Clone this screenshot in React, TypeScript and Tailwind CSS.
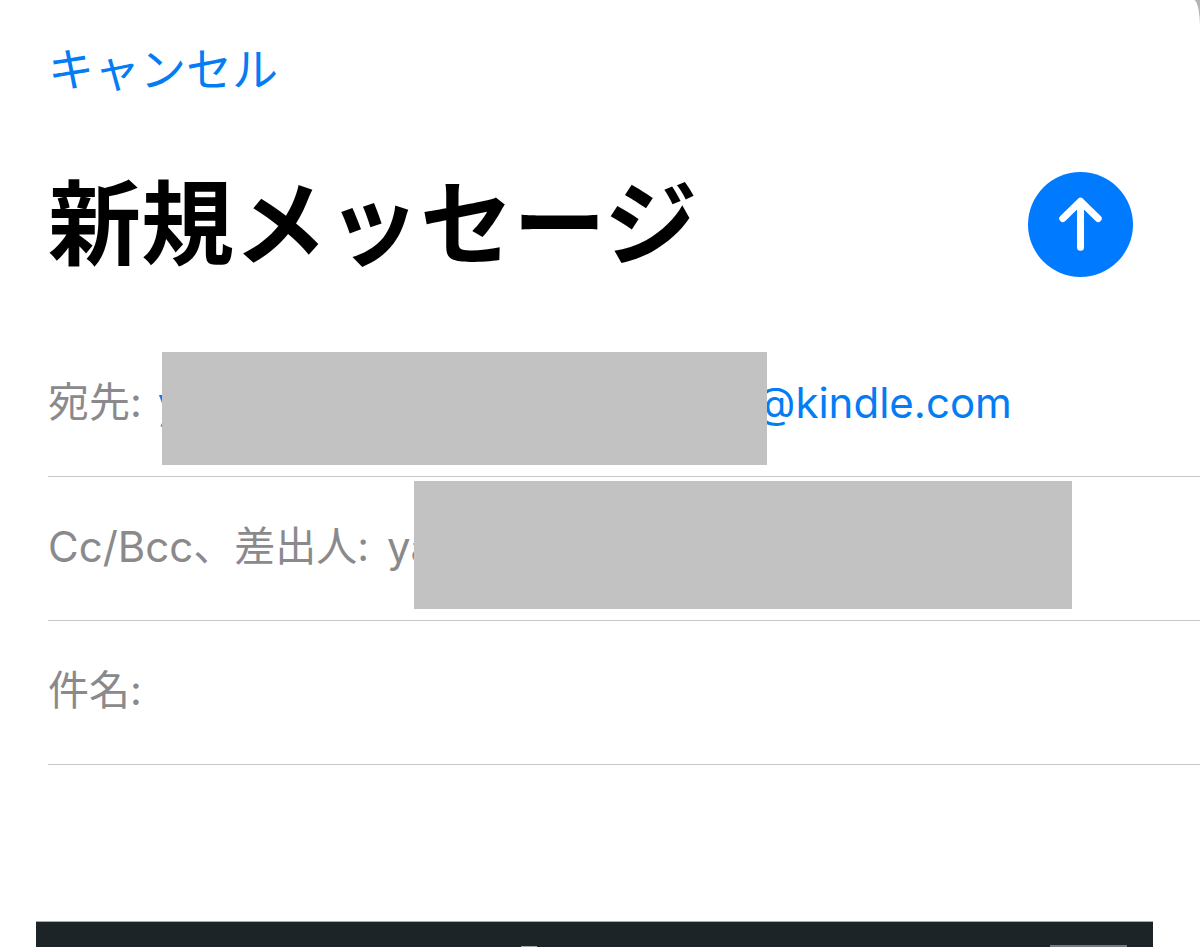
import type { ReactNode } from "react";

const Mask = ({ className }: { className: string }) => (
  <span aria-hidden="true" className={`relative z-10 shrink-0 bg-[#c2c2c2] ${className}`} />
);

const Row = ({ children }: { children: ReactNode }) => (
  <div className="flex h-36 items-center border-b border-[#c8c8ca] pb-1 text-[#8a8a8d]">
    {children}
  </div>
);

const SendIcon = () => (
  <svg
    viewBox="0 0 104 104"
    className="size-full"
    fill="none"
    stroke="currentColor"
    strokeWidth="7"
    strokeLinecap="round"
    strokeLinejoin="round"
    aria-hidden="true"
  >
    <path d="M52 74.5V29M34.5 46L52 29L69.5 46" />
  </svg>
);

const App = () => {
  return (
    <div className="flex min-h-screen flex-col bg-[#b4b4b6]">
      <main
        lang="ja"
        className="flex flex-1 flex-col bg-white pl-12 font-['Inter','Noto_Sans_CJK_JP',sans-serif] [border-top-right-radius:6px_28px]"
      >
        <div className="flex pt-[35px]">
          <button type="button" className="text-[46px] leading-[68px] text-[#047cf4]">
            キャンセル
          </button>
        </div>

        <header className="flex items-center justify-between pt-14 pr-[67px]">
          <h1 className="text-[93px] leading-[130px] font-bold text-black">新規メッセージ</h1>
          <button
            type="button"
            aria-label="送信"
            className="size-[105px] shrink-0 rounded-full bg-[#007aff] text-white"
          >
            <SendIcon />
          </button>
        </header>

        <form className="pt-11" onSubmit={(e) => e.preventDefault()}>
          <Row>
            <span className="text-[41px] whitespace-nowrap">宛先:</span>
            <a
              href="mailto:@kindle.com"
              className="ml-4 flex items-center text-[42px] text-[#047cf4]"
            >
              <span className="w-1">y</span>
              <Mask className="mt-3 h-[113px] w-[605px]" />
              <span className="-ml-3">@kindle.com</span>
            </a>
          </Row>

          <Row>
            <button type="button" className="flex items-center whitespace-nowrap">
              <span className="text-[42px]">Cc/Bcc</span>
              <span className="text-[41px]">、差出人:</span>
              <span className="ml-[18px] w-[27px] text-[42px]">ya</span>
              <Mask className="mb-1 h-32 w-[658px]" />
            </button>
          </Row>

          <Row>
            <label htmlFor="subject" className="text-[41px] whitespace-nowrap">
              件名:
            </label>
            <input
              id="subject"
              type="text"
              className="ml-4 min-w-0 flex-1 bg-transparent text-[42px] text-black outline-none"
            />
          </Row>
        </form>

        {/* top edge of the attached image */}
        <div className="mt-[156px] mr-[47px] -ml-3 flex h-[26px] items-end justify-between border-t border-[#a8abae] bg-[#1d2428] pr-[26px] pl-[485px]">
          <span className="h-px w-4 bg-[#a2a6a8]" />
          <span className="h-0.5 w-[77px] bg-[#737a7d]" />
        </div>
      </main>
    </div>
  );
};

export default App;
